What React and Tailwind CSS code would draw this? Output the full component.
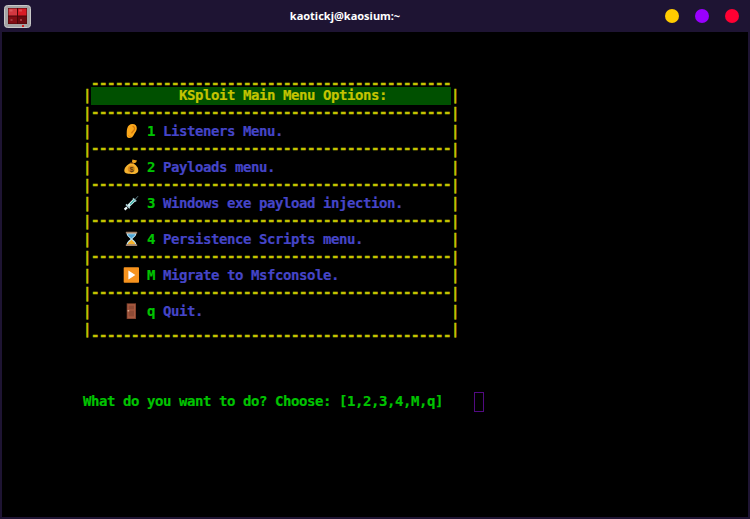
const Ear = () => (
  <svg width="16" height="16" viewBox="0 0 16 16">
    <path d="M9.4 1C12.4 1 14 3 13.8 5.8C13.6 8.2 12 9.4 11 11.4C10 13.6 8.4 15 6.2 15C4.2 15 3.6 13.4 3.7 11.4C3.8 9.4 3.6 7.6 4.2 5.4C4.9 2.8 6.8 1 9.4 1Z" fill="#fba81c" />
    <path d="M9.6 3.2C11.4 3.6 12 5.4 11.2 6.9C10.4 8.3 9 8.6 8.6 10.4" fill="none" stroke="#d67a0c" strokeWidth="1.4" />
    <path d="M7.8 13.6C6.8 14 5.7 13.4 5.5 12.2" fill="none" stroke="#e58a10" strokeWidth="1" />
  </svg>
);
const Bag = () => (
  <svg width="16" height="16" viewBox="0 0 16 16">
    <path d="M9.4 0.6L14 1.4L13 3.4L10.4 4.4L9 3Z" fill="#f2a71f" />
    <path d="M9.8 4.2C12.6 5.3 15.4 8.6 15.3 11.4C15.2 14.2 12.8 15 8.3 15C3.8 15 1.3 14.2 1.3 11.6C1.3 8.6 4.4 5.2 7.4 4.2Z" fill="#f6b330" />
    <path d="M7.4 3.9L10.8 4.3" stroke="#a65f10" strokeWidth="1" />
    <circle cx="8.3" cy="10" r="3.6" fill="#d98d1c" />
    <text x="8.3" y="12.6" textAnchor="middle" fontSize="7.5" fontWeight="700" fontFamily="Liberation Sans, sans-serif" fill="#5f3a10">$</text>
  </svg>
);
const Syringe = () => (
  <svg width="16" height="16" viewBox="0 0 16 16">
    <path d="M11.5 5.2L15 1.2" stroke="#5a7a80" strokeWidth="1" />
    <path d="M10 3.2L13.2 6.4" stroke="#8fb6be" strokeWidth="1.6" />
    <path d="M10.4 3.8L12.6 6L6 12.6L3.8 10.4Z" fill="#d8f2f5" />
    <path d="M10.9 4.6L11.9 5.6L7.6 9.9L6.6 8.9Z" fill="#3fb0a6" />
    <path d="M3 9.4L6.8 13.2" stroke="#a9ccd2" strokeWidth="1.6" />
    <path d="M4 12.4L1.6 14.6" stroke="#eef8fa" strokeWidth="2.2" />
  </svg>
);
const Hourglass = () => (
  <svg width="16" height="16" viewBox="0 0 16 16">
    <path d="M3.6 2H13.4C13.4 5.4 10.4 6.6 9.4 7.9C10.4 9.2 13.4 10.4 13.4 13.8H3.6C3.6 10.4 6.6 9.2 7.6 7.9C6.6 6.6 3.6 5.4 3.6 2Z" fill="#bfe4f2" />
    <path d="M4.8 3.2H12.2C12 5 9.6 6.2 8.5 7.4C7.4 6.2 5 5 4.8 3.2Z" fill="#4ea6d6" />
    <path d="M8.5 8.8C9.6 10.2 11.8 11 12.4 13.4H4.6C5.2 11 7.4 10.2 8.5 8.8Z" fill="#f7b02a" />
    <rect x="2.8" y="0.7" width="11.4" height="1.7" rx="0.5" fill="#a5836a" />
    <rect x="2.8" y="13.3" width="11.4" height="1.7" rx="0.5" fill="#a5836a" />
  </svg>
);
const Play = () => (
  <svg width="16" height="16" viewBox="0 0 16 16">
    <rect x="0.7" y="0.3" width="15.3" height="15.4" rx="0.8" fill="#f7931e" />
    <path d="M5.4 3.6L12.4 8L5.4 12.4Z" fill="#ffffff" />
  </svg>
);
const Door = () => (
  <svg width="16" height="16" viewBox="0 0 16 16">
    <rect x="3.7" y="0.3" width="9.3" height="15.7" fill="#7c3f2c" />
    <rect x="4.5" y="1.1" width="7.7" height="14.1" fill="#a85a40" />
    <rect x="5.7" y="2.6" width="5.3" height="3.8" fill="#8e4a35" />
    <rect x="5.7" y="7.6" width="5.3" height="5.8" fill="#8e4a35" />
    <rect x="4.6" y="7.2" width="1.6" height="1.2" fill="#e8c0a0" />
  </svg>
);

const Y = "text-[#c4c400]";
const G = "text-[#00c400]";
const B = "text-[#4545c8]";
const Heavy = "[-webkit-text-stroke:0.4px_#c4c400]";

const Row = ({ children }) => (
  <div className="h-[18px] leading-[16px] whitespace-pre flex">{children}</div>
);
const Bar = () => <span className={`${Y} ${Heavy} w-[8px] text-center`}>|</span>;
const Dashes = ({ low, edge }) => (
  <Row>
    {edge ? <Bar /> : <span className="w-[8px]" />}
    <span className={`${Y} ${Heavy} w-[360px] ${low ? "leading-[28px]" : "leading-[14px]"}`}>{"-".repeat(45)}</span>
    {edge ? <Bar /> : <span className="w-[8px]" />}
  </Row>
);
const Item = ({ icon, k, label }) => (
  <Row>
    <Bar />
    <span className="w-[32px]" />
    <span className="w-[16px] h-[18px] flex items-start">{icon}</span>
    <span className="w-[8px]" />
    <span className={`${G} w-[16px] [-webkit-text-stroke:0.2px_#00c400]`}>{k}</span>
    <span className={`${B} w-[288px] [-webkit-text-stroke:0.2px_#4545c8]`}>{label}</span>
    <Bar />
  </Row>
);

const items = [
  [<Ear />, "1", "Listeners Menu."],
  [<Bag />, "2", "Payloads menu."],
  [<Syringe />, "3", "Windows exe payload injection."],
  [<Hourglass />, "4", "Persistence Scripts menu."],
  [<Play />, "M", "Migrate to Msfconsole."],
  [<Door />, "q", "Quit."],
];

export default function App() {
  return (
    <div className="w-[750px] h-[519px] bg-[#1e1433] flex flex-col overflow-hidden pb-[2px] font-['Liberation_Sans',sans-serif]">
      <div className="h-[32px] flex items-center shrink-0 pl-[4px] pr-[11px]">
        <svg width="27" height="23" viewBox="0 0 27 23">
          <rect x="0.5" y="0.5" width="26" height="22" rx="3" fill="#a4a4a4" stroke="#c8c8c8" />
          <rect x="4" y="3" width="19" height="16" fill="#4a0608" />
          <rect x="4.5" y="3.5" width="8.5" height="7" fill="#d23840" />
          <rect x="14" y="3.5" width="8.5" height="7" fill="#d81c26" />
          <rect x="4.5" y="11.5" width="8.5" height="7" fill="#820e14" />
          <rect x="14" y="11.5" width="8.5" height="7" fill="#6c0a10" />
          <rect x="5.5" y="4.5" width="3" height="2" fill="#dc585e" />
          <rect x="15" y="4.5" width="3" height="2" fill="#dc484e" />
          <rect x="6.5" y="14" width="2" height="2" fill="#a0383e" />
          <rect x="16" y="14" width="2" height="2" fill="#a0383e" />
          <rect x="18" y="20" width="2" height="2" fill="#d82020" />
        </svg>
        <div className="flex-1 text-center text-white text-[11px] font-bold font-['Noto_Sans',sans-serif] pr-[6px]">kaotickj@kaosium:~</div>
        <div className="flex items-center gap-[16px]">
          <span className="w-[14px] h-[14px] rounded-full bg-[#ffcc00]" />
          <span className="w-[14px] h-[14px] rounded-full bg-[#9900ff]" />
          <span className="w-[14px] h-[14px] rounded-full bg-[#ff0033]" />
        </div>
      </div>
      <div className="flex-1 mx-[2px] bg-black pt-[37px] pl-[81px] text-[14px] tracking-[-0.43px] font-bold font-['DejaVu_Sans_Mono',monospace]">
        <Dashes low />
        <Row>
          <Bar />
          <span className={`${Y} w-[360px] bg-[#005000] pl-[88px] [-webkit-text-stroke:0.2px_#c4c400]`}>KSploit Main Menu Options:</span>
          <Bar />
        </Row>
        {items.map(([icon, k, label]) => (
          <div key={k}>
            <Dashes edge />
            <Item icon={icon} k={k} label={label} />
          </div>
        ))}
        <Dashes low edge />
        <div className="h-[54px]" />
        <Row>
          <span className={`${G} [-webkit-text-stroke:0.2px_#00c400]`}>What do you want to do? Choose: [1,2,3,4,M,q]</span>
          <span className="w-[31px]" />
          <span className="w-[10px] h-[20px] -mt-px border border-[#520a82]" />
        </Row>
      </div>
    </div>
  );
}
